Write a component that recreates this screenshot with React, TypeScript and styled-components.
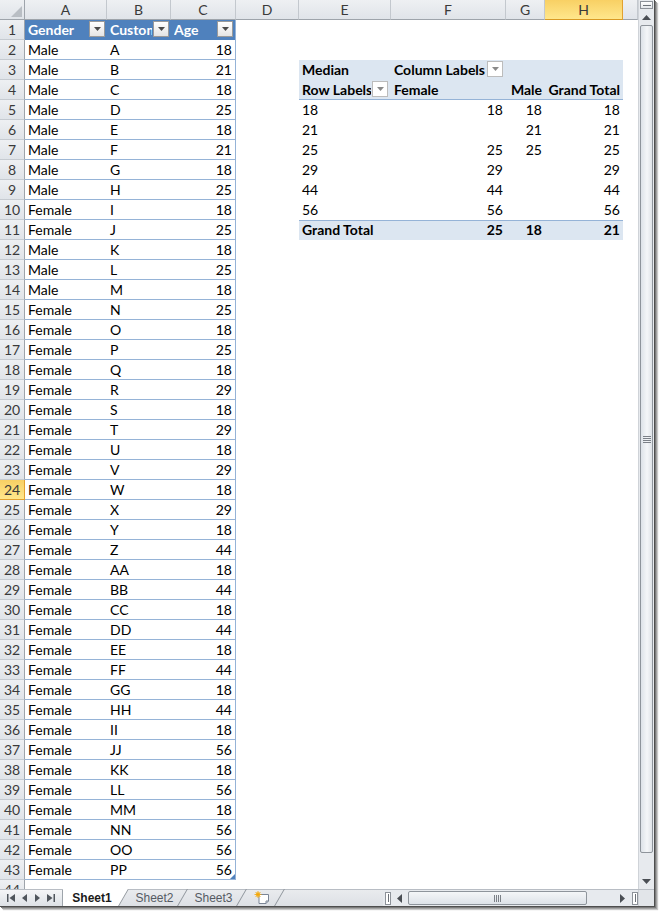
import React from 'react';
import styled, { createGlobalStyle, css } from 'styled-components';

const GlobalStyle = createGlobalStyle`
  html, body { margin: 0; padding: 0; background: #ffffff; }
  body { font-family: Lato, "Liberation Sans", sans-serif; }
  * { box-sizing: border-box; }
`;

const COLS = '25px 82px 64px 65px 63px 92px 115px 39px 78px 15px';
const LETTERS = ['A', 'B', 'C', 'D', 'E', 'F', 'G', 'H', ''];

type Kind = 'plain' | 'th' | 'td' | 'pv' | 'pvLine' | 'pvTotal';
type Align = 'left' | 'right';
interface Spec {
  text?: string;
  align?: Align;
  bold?: boolean;
  kind?: Kind;
  btn?: 'filter' | 'pivot';
  rightLine?: boolean;
  handle?: boolean;
}

const DATA: [string, string, number][] = [
  ['Male', 'A', 18], ['Male', 'B', 21], ['Male', 'C', 18], ['Male', 'D', 25],
  ['Male', 'E', 18], ['Male', 'F', 21], ['Male', 'G', 18], ['Male', 'H', 25],
  ['Female', 'I', 18], ['Female', 'J', 25], ['Male', 'K', 18], ['Male', 'L', 25],
  ['Male', 'M', 18], ['Female', 'N', 25], ['Female', 'O', 18], ['Female', 'P', 25],
  ['Female', 'Q', 18], ['Female', 'R', 29], ['Female', 'S', 18], ['Female', 'T', 29],
  ['Female', 'U', 18], ['Female', 'V', 29], ['Female', 'W', 18], ['Female', 'X', 29],
  ['Female', 'Y', 18], ['Female', 'Z', 44], ['Female', 'AA', 18], ['Female', 'BB', 44],
  ['Female', 'CC', 18], ['Female', 'DD', 44], ['Female', 'EE', 18], ['Female', 'FF', 44],
  ['Female', 'GG', 18], ['Female', 'HH', 44], ['Female', 'II', 18], ['Female', 'JJ', 56],
  ['Female', 'KK', 18], ['Female', 'LL', 56], ['Female', 'MM', 18], ['Female', 'NN', 56],
  ['Female', 'OO', 56], ['Female', 'PP', 56],
];

const PIVOT_BODY: [string, string, string, string][] = [
  ['18', '18', '18', '18'],
  ['21', '', '21', '21'],
  ['25', '25', '25', '25'],
  ['29', '29', '', '29'],
  ['44', '44', '', '44'],
  ['56', '56', '', '56'],
];

function pivotCells(r: number): Spec[] {
  if (r === 3) {
    return [
      { text: 'Median', bold: true, kind: 'pv' },
      { text: 'Column Labels', bold: true, kind: 'pv', btn: 'pivot' },
      { kind: 'pv' },
      { kind: 'pv' },
    ];
  }
  if (r === 4) {
    return [
      { text: 'Row Labels', bold: true, kind: 'pvLine', btn: 'pivot' },
      { text: 'Female', bold: true, kind: 'pvLine' },
      { text: 'Male', bold: true, kind: 'pvLine', align: 'right' },
      { text: 'Grand Total', bold: true, kind: 'pvLine', align: 'right' },
    ];
  }
  if (r >= 5 && r <= 10) {
    const v = PIVOT_BODY[r - 5];
    return [
      { text: v[0] },
      { text: v[1], align: 'right' },
      { text: v[2], align: 'right' },
      { text: v[3], align: 'right' },
    ];
  }
  if (r === 11) {
    return [
      { text: 'Grand Total', bold: true, kind: 'pvTotal' },
      { text: '25', bold: true, kind: 'pvTotal', align: 'right' },
      { text: '18', bold: true, kind: 'pvTotal', align: 'right' },
      { text: '21', bold: true, kind: 'pvTotal', align: 'right' },
    ];
  }
  return [{}, {}, {}, {}];
}

function tableCells(r: number): Spec[] {
  if (r === 1) {
    return [
      { text: 'Gender', kind: 'th', bold: true, btn: 'filter' },
      { text: 'Customer', kind: 'th', bold: true, btn: 'filter' },
      { text: 'Age', kind: 'th', bold: true, btn: 'filter', rightLine: true },
    ];
  }
  if (r >= 2 && r <= 43) {
    const d = DATA[r - 2];
    return [
      { text: d[0], kind: 'td' },
      { text: d[1], kind: 'td' },
      { text: String(d[2]), kind: 'td', align: 'right', rightLine: true, handle: r === 43 },
    ];
  }
  return [{}, {}, {}];
}

function rowCells(r: number): Spec[] {
  return [...tableCells(r), {}, ...pivotCells(r), {}];
}

/* ---------- layout ---------- */

const Page = styled.div`
  width: 659px;
  height: 911px;
  overflow: hidden;
  background: #ffffff;
`;

const Window = styled.div`
  width: 655px;
  height: 907px;
  display: flex;
  flex-direction: column;
  border-right: 1px solid #4e4e4e;
  border-bottom: 1px solid #4e4e4e;
  box-shadow: 1px 1px 0 #7c7c7c, 2px 2px 0 #a3a3a3, 3px 3px 1px #c9c9c9;
  background: #ffffff;
`;

const Main = styled.div`
  display: flex;
  height: 889px;
  flex: none;
`;

const Sheet = styled.div`
  width: 638px;
  height: 889px;
  overflow: hidden;
  display: flex;
  flex-direction: column;
`;

const GridRow = styled.div<{ $h?: number }>`
  display: grid;
  grid-template-columns: ${COLS};
  height: ${(p) => p.$h ?? 20}px;
  flex: none;
`;

const headBg = css`
  background: linear-gradient(#eef0f3, #e0e4e9);
  color: #3a3a3a;
  font-size: 14px;
`;

const selBg = css`
  background: linear-gradient(#f8d064, #ffe78c);
`;

const Corner = styled.div`
  ${headBg};
  position: relative;
  border-right: 1px solid #9ea4ab;
  border-bottom: 1px solid #9ea4ab;
  &::after {
    content: '';
    position: absolute;
    right: 2px;
    bottom: 2px;
    border-style: solid;
    border-width: 0 0 11px 11px;
    border-color: transparent transparent #b9bec4 transparent;
  }
`;

const ColHead = styled.div<{ $sel?: boolean }>`
  ${headBg};
  ${(p) => p.$sel && selBg};
  border-right: 1px solid ${(p) => (p.$sel ? '#e2a12f' : '#c3c8ce')};
  border-bottom: 1px solid ${(p) => (p.$sel ? '#d99a24' : '#9ea4ab')};
  display: flex;
  align-items: center;
  justify-content: center;
  line-height: 19px;
`;

const RowHead = styled.div<{ $sel?: boolean }>`
  ${headBg};
  ${(p) => p.$sel && selBg};
  border-right: 1px solid ${(p) => (p.$sel ? '#e2a12f' : '#9ea4ab')};
  border-bottom: 1px solid ${(p) => (p.$sel ? '#e2a12f' : '#c6cbd1')};
  display: flex;
  align-items: flex-end;
  justify-content: center;
  padding-bottom: 1px;
  line-height: 17px;
`;

const kindStyles: Record<Kind, ReturnType<typeof css> | string> = {
  plain: '',
  th: css`
    background: #4f81bd;
    color: #ffffff;
    padding-right: 2px;
  `,
  td: css`
    border-bottom: 1px solid #95b3d7;
    padding-bottom: 1px;
  `,
  pv: css`
    background: #dce6f1;
  `,
  pvLine: css`
    background: #dce6f1;
    border-bottom: 1px solid #95b3d7;
    padding-bottom: 1px;
  `,
  pvTotal: css`
    background: #dce6f1;
    border-top: 1px solid #95b3d7;
  `,
};

const Cell = styled.div<{ $kind: Kind; $align: Align; $bold?: boolean; $rightLine?: boolean; $handle?: boolean }>`
  position: relative;
  display: flex;
  align-items: flex-end;
  justify-content: ${(p) => (p.$align === 'right' ? 'flex-end' : 'flex-start')};
  min-width: 0;
  overflow: hidden;
  padding: 0 3px 2px 3px;
  font-size: 14px;
  line-height: 17px;
  white-space: nowrap;
  color: #000000;
  font-weight: ${(p) => (p.$bold ? 700 : 400)};
  ${(p) => kindStyles[p.$kind]};
  ${(p) => p.$rightLine && css`border-right: 1px solid #95b3d7;`};
  ${(p) =>
    p.$handle &&
    css`
      &::after {
        content: '';
        position: absolute;
        right: 0;
        bottom: 0;
        border-style: solid;
        border-width: 0 0 5px 5px;
        border-color: transparent transparent #4f81bd transparent;
      }
    `};
`;

const Label = styled.span`
  flex: 1 1 auto;
  min-width: 0;
  overflow: hidden;
`;

const DropBtn = styled.span<{ $pivot?: boolean }>`
  flex: none;
  align-self: center;
  width: 16px;
  height: 16px;
  margin-left: 1px;
  display: flex;
  align-items: center;
  justify-content: center;
  border: 1px solid ${(p) => (p.$pivot ? '#bcbcbc' : '#9a9a9a')};
  background: ${(p) => (p.$pivot ? '#ffffff' : 'linear-gradient(#ffffff, #e4e4e4)')};
`;

function Tri({ color, dir = 'down', w = 7, h = 4 }: { color: string; dir?: 'down' | 'up' | 'left' | 'right'; w?: number; h?: number }) {
  const pts =
    dir === 'down'
      ? `0,0 ${w},0 ${w / 2},${h}`
      : dir === 'up'
      ? `0,${h} ${w},${h} ${w / 2},0`
      : dir === 'left'
      ? `${w},0 ${w},${h} 0,${h / 2}`
      : `0,0 0,${h} ${w},${h / 2}`;
  return (
    <svg width={w} height={h} viewBox={`0 0 ${w} ${h}`} style={{ display: 'block' }}>
      <polygon points={pts} fill={color} />
    </svg>
  );
}

/* ---------- scrollbars ---------- */

const VScroll = styled.div`
  width: 16px;
  height: 889px;
  display: flex;
  flex-direction: column;
  background: #e7eaee;
  border-left: 1px solid #cfd3d8;
`;

const VSplit = styled.div`
  height: 8px;
  margin: 1px 1px 0 1px;
  border: 1px solid #8d9299;
  background: linear-gradient(#ffffff, #e3e6ea);
  display: flex;
  align-items: center;
  justify-content: center;
  &::after {
    content: '';
    width: 8px;
    height: 1px;
    background: #6d7279;
  }
`;

const ArrowBox = styled.div<{ $w?: number; $h?: number }>`
  flex: none;
  width: ${(p) => (p.$w ? `${p.$w}px` : 'auto')};
  height: ${(p) => (p.$h ? `${p.$h}px` : 'auto')};
  display: flex;
  align-items: center;
  justify-content: center;
`;

const VThumb = styled.div`
  flex: none;
  height: 828px;
  margin: 0 1px;
  border: 1px solid #8e949b;
  border-radius: 2px;
  background: linear-gradient(90deg, #dde2e8, #f4f6f8 55%, #dfe3e8);
  display: flex;
  flex-direction: column;
  align-items: center;
  justify-content: center;
  gap: 1px;
`;

const GripH = styled.span`
  width: 8px;
  height: 1px;
  background: #7b8087;
`;

const Spacer = styled.div`
  flex: 1;
`;

const Bottom = styled.div`
  display: flex;
  height: 17px;
  flex: none;
  background: linear-gradient(#e9ebee, #dde0e5);
  border-top: 1px solid #b8bdc4;
  font-family: "Liberation Sans", Arial, sans-serif;
`;

const Nav = styled.div`
  width: 63px;
  flex: none;
  display: flex;
  align-items: center;
  justify-content: space-around;
  padding: 0 3px;
  border-right: 1px solid #9ea4ab;
  background: linear-gradient(#f4f5f7, #dde1e6);
`;

const NavIcon = styled.span`
  display: flex;
  align-items: center;
`;

const Tabs = styled.div`
  width: 320px;
  flex: none;
  display: flex;
`;

const Tab = styled.div<{ $active?: boolean; $w: number }>`
  position: relative;
  width: ${(p) => p.$w}px;
  flex: none;
  display: flex;
  align-items: center;
  justify-content: center;
  padding-right: 8px;
  font-size: 12px;
  color: ${(p) => (p.$active ? '#1a1a1a' : '#555b63')};
  font-weight: ${(p) => (p.$active ? 700 : 400)};
  margin-top: -1px;
  &::before {
    content: '';
    position: absolute;
    inset: 0;
    z-index: 0;
    background: ${(p) => (p.$active ? '#ffffff' : 'transparent')};
    clip-path: polygon(0 0, 100% 0, calc(100% - 10px) 100%, 0 100%);
  }
  &::after {
    content: '';
    position: absolute;
    top: 0;
    bottom: 0;
    right: 5px;
    width: 1px;
    background: #8f959c;
    transform: skewX(-30deg);
  }
  & > * {
    position: relative;
    z-index: 1;
  }
`;

const TabText = styled.span``;

const HScroll = styled.div`
  flex: 1;
  display: flex;
  align-items: center;
  background: #e7eaee;
`;

const HSplitMark = styled.div`
  flex: none;
  width: 6px;
  height: 13px;
  margin-left: 2px;
  border: 1px solid #8d9299;
  background: #ffffff;
  display: flex;
  align-items: center;
  justify-content: center;
  &::after {
    content: '';
    width: 1px;
    height: 8px;
    background: #6d7279;
  }
`;

const HThumb = styled.div`
  flex: none;
  width: 179px;
  height: 14px;
  margin-left: 1px;
  border: 1px solid #8e949b;
  border-radius: 2px;
  background: linear-gradient(#f4f6f8, #dde2e8);
  display: flex;
  align-items: center;
  justify-content: center;
  gap: 1px;
`;

const GripV = styled.span`
  width: 1px;
  height: 7px;
  background: #7b8087;
`;

const ScrollCorner = styled.div`
  width: 16px;
  flex: none;
  background: #e2e5e9;
  border-left: 1px solid #cfd3d8;
`;

function InsertIcon() {
  return (
    <svg width="16" height="13" viewBox="0 0 16 13">
      <path d="M5 3.5 H14.5 V10 L12 12.5 H5 Z" fill="#ffffff" stroke="#7b8596" strokeWidth="1" />
      <path d="M12 12.5 V10 H14.5" fill="none" stroke="#7b8596" strokeWidth="1" />
      <circle cx="4" cy="3.5" r="2.2" fill="#f5c242" />
      <path d="M4 0 V7 M0.5 3.5 H7.5 M1.5 1 L6.5 6 M6.5 1 L1.5 6" stroke="#f0a30a" strokeWidth="0.8" />
    </svg>
  );
}

const ROWS = Array.from({ length: 44 }, (_, i) => i + 1);

export default function App() {
  return (
    <Page>
      <GlobalStyle />
      <Window>
        <Main>
          <Sheet>
            <GridRow>
              <Corner />
              {LETTERS.map((l, i) => (
                <ColHead key={i} $sel={l === 'H'}>
                  {l}
                </ColHead>
              ))}
            </GridRow>
            {ROWS.map((r) => (
              <GridRow key={r}>
                <RowHead $sel={r === 24}>{r}</RowHead>
                {rowCells(r).map((c, i) => (
                  <Cell
                    key={i}
                    $kind={c.kind ?? 'plain'}
                    $align={c.align ?? 'left'}
                    $bold={c.bold}
                    $rightLine={c.rightLine}
                    $handle={c.handle}
                  >
                    {c.btn ? (
                      <>
                        <Label>{c.text}</Label>
                        <DropBtn $pivot={c.btn === 'pivot'}>
                          <Tri color={c.btn === 'pivot' ? '#8a8a8a' : '#4a4a4a'} />
                        </DropBtn>
                      </>
                    ) : (
                      c.text
                    )}
                  </Cell>
                ))}
              </GridRow>
            ))}
          </Sheet>
          <VScroll>
            <VSplit />
            <ArrowBox $h={16}>
              <Tri color="#4a4e54" dir="up" w={9} h={5} />
            </ArrowBox>
            <VThumb>
              <GripH />
              <GripH />
              <GripH />
              <GripH />
            </VThumb>
            <Spacer />
            <ArrowBox $h={16}>
              <Tri color="#4a4e54" dir="down" w={9} h={5} />
            </ArrowBox>
          </VScroll>
        </Main>
        <Bottom>
          <Nav>
            <NavIcon>
              <svg width="8" height="8" viewBox="0 0 8 8">
                <rect x="0" y="0" width="1.5" height="8" fill="#4f555c" />
                <polygon points="8,0 8,8 2.5,4" fill="#4f555c" />
              </svg>
            </NavIcon>
            <NavIcon>
              <Tri color="#4f555c" dir="left" w={5} h={8} />
            </NavIcon>
            <NavIcon>
              <Tri color="#4f555c" dir="right" w={5} h={8} />
            </NavIcon>
            <NavIcon>
              <svg width="8" height="8" viewBox="0 0 8 8">
                <polygon points="0,0 0,8 5.5,4" fill="#4f555c" />
                <rect x="6.5" y="0" width="1.5" height="8" fill="#4f555c" />
              </svg>
            </NavIcon>
          </Nav>
          <Tabs>
            <Tab $active $w={66}>
              <TabText>Sheet1</TabText>
            </Tab>
            <Tab $w={59}>
              <TabText>Sheet2</TabText>
            </Tab>
            <Tab $w={59}>
              <TabText>Sheet3</TabText>
            </Tab>
            <Tab $w={38}>
              <InsertIcon />
            </Tab>
          </Tabs>
          <HScroll>
            <HSplitMark />
            <ArrowBox $w={16}>
              <Tri color="#4a4e54" dir="left" w={5} h={9} />
            </ArrowBox>
            <HThumb>
              <GripV />
              <GripV />
              <GripV />
              <GripV />
            </HThumb>
            <Spacer />
            <ArrowBox $w={16}>
              <Tri color="#4a4e54" dir="right" w={5} h={9} />
            </ArrowBox>
            <HSplitMark />
          </HScroll>
          <ScrollCorner />
        </Bottom>
      </Window>
    </Page>
  );
}
